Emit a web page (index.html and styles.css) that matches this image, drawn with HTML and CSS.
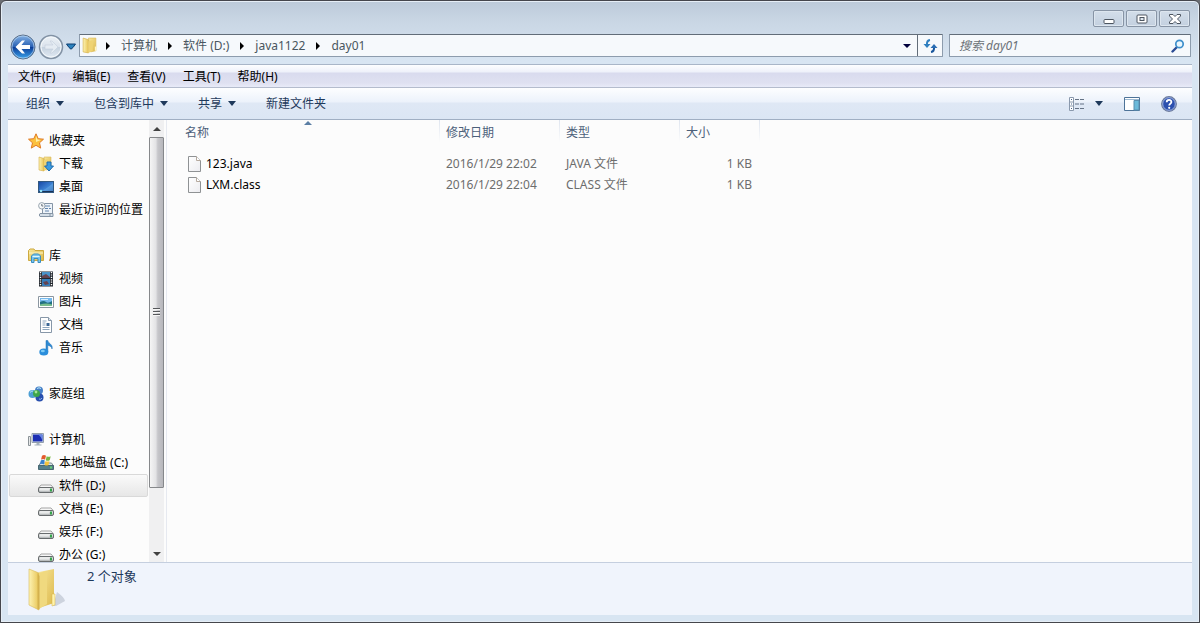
FILE: index.html
```html
<!DOCTYPE html>
<html lang="zh-CN">
<head>
<meta charset="utf-8">
<title>day01</title>
<link rel="stylesheet" href="styles.css">
</head>
<body>
<svg class="defs" aria-hidden="true">
  <defs>
    <linearGradient id="gold" x1="0" x2="1"><stop offset="0" stop-color="#fdf3b4"/><stop offset="1" stop-color="#e8c555"/></linearGradient>
    <linearGradient id="goldDeep" x1="0" x2="1" y2="1"><stop offset="0" stop-color="#f8e79a"/><stop offset="1" stop-color="#dcb84c"/></linearGradient>
    <linearGradient id="blue" y2="1" x2="0"><stop offset="0" stop-color="#86b4e6"/><stop offset=".48" stop-color="#2b62b4"/><stop offset=".52" stop-color="#0d3f99"/><stop offset="1" stop-color="#3ba6ee"/></linearGradient>
    <linearGradient id="glass" y2="1" x2="0"><stop offset="0" stop-color="#edf2f7"/><stop offset=".48" stop-color="#dbe3ec"/><stop offset=".52" stop-color="#c6d2df"/><stop offset="1" stop-color="#e3ecf5"/></linearGradient>
    <linearGradient id="sky" x2="1" y2="1"><stop offset="0" stop-color="#1646a4"/><stop offset=".6" stop-color="#3f86d6"/><stop offset="1" stop-color="#1b4c95"/></linearGradient>
    <linearGradient id="page" x2="1" y2="1"><stop offset="0" stop-color="#fff"/><stop offset="1" stop-color="#ececf0"/></linearGradient>
    <linearGradient id="metal" y2="1" x2="0"><stop offset="0" stop-color="#fafafa"/><stop offset="1" stop-color="#a9adaf"/></linearGradient>
    <symbol id="drive" viewBox="0 0 16 16">
      <path d="M3 6h10l2.500 3H.5z" fill="#f7f7f7" stroke="#a5a5a5"/>
      <rect x=".5" y="8.500" width="15" height="5" rx="1.500" fill="url(#metal)" stroke="#686c6e"/>
      <rect x="2" y="9.500" width="9" height="2" fill="#e9ebeb"/>
      <rect x="12" y="9.500" width="2" height="3" fill="#35a54a"/>
    </symbol>
    <symbol id="file" viewBox="0 0 14 16">
      <path d="M.5.500h8l4 4v11H.5z" fill="url(#page)" stroke="#8f9294"/>
      <path d="M8.500.500v4h4" fill="#fff" stroke="#b5a99e"/>
    </symbol>
    <symbol id="folder" viewBox="0 0 14 16">
      <path d="M6 1h7v12l-5 1z" fill="url(#goldDeep)" stroke="#dcbb5c" stroke-width=".6"/>
      <path d="M1 1l5 1.500V15l-5-1z" fill="url(#gold)" stroke="#d3ad45" stroke-width=".6"/>
      <path d="M6 4l4-1v10l-4 2z" fill="#efd373"/>
      <path d="M12 9h1.500v4H12z" fill="#fff5c4"/>
    </symbol>
  </defs>
</svg>

<div class="window">
  <header class="titlebar">
    <button class="win-btn" aria-label="最小化"><svg width="12" height="12" viewBox="0 0 12 12"><rect x="1" y="6.500" width="10" height="4" rx="1" fill="#fff" stroke="#4c5560"/></svg></button>
    <button class="win-btn" aria-label="还原"><svg width="12" height="12" viewBox="0 0 12 12"><rect x="1" y="2" width="10" height="8" rx="1" fill="#fff" stroke="#4c5560"/><rect x="4" y="4.500" width="4" height="3" fill="#dfe8f1" stroke="#4c5560"/></svg></button>
    <button class="win-btn" aria-label="关闭"><svg width="12" height="12" viewBox="0 0 12 12"><path d="M.5 1.500h3.500L6 3.500l2-2h3.500V3L8.500 6l3 3v1.500H8l-2-2-2 2H.5V9l3-3-3-3z" fill="#fff" stroke="#4c5560"/></svg></button>
  </header>

  <div class="navbar">
    <div class="history">
      <button class="round back" aria-label="后退"><svg width="26" height="26" viewBox="0 0 26 26"><circle cx="13" cy="13" r="12" fill="url(#blue)" stroke="#5b6f88"/><circle cx="13" cy="13" r="11" fill="none" stroke="#b7d3ef" stroke-opacity=".7"/><path d="M5.500 13l6.500-6.500h3L11.500 11H20v4h-8.500l3.500 4.500h-3z" fill="#fff"/></svg></button>
      <button class="round" aria-label="前进"><svg width="26" height="26" viewBox="0 0 26 26"><circle cx="13" cy="13" r="11.500" fill="url(#glass)" stroke="#8292a4" stroke-width="1.500"/><circle cx="13" cy="13" r="10" fill="none" stroke="#f4f8fb"/><path d="M20 13l-6-6h-2l3 4H7v4h8l-3 4h2z" fill="#e5ecf3" stroke="#c3cfdb" stroke-width=".6"/></svg></button>
      <button class="round" aria-label="最近的页面"><svg width="10" height="7" viewBox="0 0 10 7"><path d="M.5 1h9L7 4.500 5 6.200 3 4.500z" fill="#2c82bd" stroke="#0d3f72"/></svg></button>
    </div>
    <div class="address">
      <svg class="addr-icon" width="15" height="17"><use href="#folder"/></svg>
      <nav class="crumbs" aria-label="路径">
        <i class="arrow"></i><a href="#">计算机</a>
        <i class="arrow"></i><a href="#">软件 (D:)</a>
        <i class="arrow"></i><a href="#">java1122</a>
        <i class="arrow"></i><a href="#">day01</a>
      </nav>
      <button class="addr-drop" aria-label="以前的位置"><i class="caret dark"></i></button>
      <button class="refresh" aria-label="刷新"><svg width="15" height="14" viewBox="0 0 15 14"><path d="M7 1Q3.500 1.500 4 6" fill="none" stroke="#2f7fc0" stroke-width="2"/><path d="M.5 5h7L4 9z" fill="#2f7fc0"/><path d="M8 13q3.500-.5 3-5" fill="none" stroke="#17559c" stroke-width="2"/><path d="M7.500 9h7L11 5z" fill="#2a6db4"/></svg></button>
    </div>
    <label class="search">
      <input type="search" placeholder="搜索 day01" aria-label="搜索 day01">
      <svg width="14" height="14" viewBox="0 0 14 14"><path d="M1.500 12.500L6 8" stroke="#2b4b94" stroke-width="2.400" stroke-linecap="round"/><circle cx="8.500" cy="5" r="3.700" fill="#e9f6fd" stroke="#3d8ecb" stroke-width="1.700"/></svg>
    </label>
  </div>

  <div class="client">
    <nav class="menubar" aria-label="菜单">
      <button>文件(F)</button><button>编辑(E)</button><button>查看(V)</button><button>工具(T)</button><button>帮助(H)</button>
    </nav>
    <div class="toolbar">
      <button>组织<i class="caret"></i></button>
      <button>包含到库中<i class="caret"></i></button>
      <button>共享<i class="caret"></i></button>
      <button>新建文件夹</button>
      <div class="tools">
        <button class="view" aria-label="更改您的视图"><svg width="16" height="14" viewBox="0 0 16 14"><path d="M.5.500h4v13h-4zM.5 5h4M.5 9h4" fill="#fff" stroke="#8a99ad"/><path d="M2 2.500h1M2 7h1M2 11.500h1" stroke="#47648c"/><path d="M6 2.500h4m1 0h4M6 7h4m1 0h4M6 11.500h4m1 0h4" stroke="#657386"/></svg><i class="caret"></i></button>
        <button aria-label="显示预览窗格"><svg width="16" height="14" viewBox="0 0 16 14"><path d="M.5.500h15v13H.5z" fill="#fff" stroke="#4d7398"/><path d="M1 2.500h14" stroke="#9dbad3"/><path d="M10 3.500h5v9.500h-5z" fill="#6bb9d9" stroke="#5b8fae"/></svg></button>
        <button aria-label="获取帮助"><svg width="16" height="16" viewBox="0 0 16 16"><circle cx="8" cy="8" r="7.300" fill="#2b4fae" stroke="#6d7c9c" stroke-width="1.200"/><circle cx="8" cy="8" r="6.300" fill="none" stroke="#b9c9ec" stroke-width=".8"/><path d="M5.700 6.300C5.700 3.200 10.500 3.200 10.400 6c0 1.600-2.200 1.700-2.200 3.600" fill="none" stroke="#fff" stroke-width="1.800"/><circle cx="8.200" cy="11.800" r="1.100" fill="#fff"/></svg></button>
      </div>
    </div>

    <div class="body">
      <aside class="sidebar">
        <ul class="tree">
          <li><a class="row" href="#"><svg width="16" height="16" viewBox="0 0 16 16"><path d="M8 .8l2.200 4.900 5.300.5-4 3.600 1.200 5.300L8 12.300l-4.700 2.800 1.200-5.300-4-3.600 5.300-.5z" fill="#fbc13e" stroke="#e07a23"/><path d="M8 3l1.400 3.500 3.400.4L8 9z" fill="#fff0a8"/></svg>收藏夹</a>
            <ul>
              <li><a class="row" href="#"><svg width="16" height="16" viewBox="0 0 16 16"><use href="#folder" width="14" height="16"/><path d="M9 6h4v4h2.500L11 15 6.500 10H9z" fill="#3c9be0" stroke="#1f6cae"/></svg>下载</a></li>
              <li><a class="row" href="#"><svg width="16" height="16" viewBox="0 0 16 16"><rect x=".5" y="2.500" width="15" height="11" fill="url(#sky)" stroke="#32587f"/><path d="M1 12q7-1 14-8v9H1z" fill="#69a9e6" opacity=".5"/><path d="M1 12.500h14" stroke="#173257"/><circle cx="3" cy="12" r="1.300" fill="#8fe0f2"/></svg>桌面</a></li>
              <li><a class="row" href="#"><svg width="16" height="16" viewBox="0 0 16 16"><path d="M4.500 1.500h10v11h-10z" fill="#edf3f9" stroke="#8595a6"/><path d="M7 4h5M7 6.500h3M11 6.500h2M7 9h4" stroke="#6385ad"/><path d="M2 11.500h10v3H2q-1.500-1.500 0-3zm10 0h3v3h-3" fill="#d4dee7" stroke="#8595a6"/><circle cx="3.800" cy="3.800" r="3.200" fill="#f7f9fa" stroke="#98a4ae"/><path d="M3.800 2v2h1.500" fill="none" stroke="#66707a"/></svg>最近访问的位置</a></li>
            </ul>
          </li>
          <li><a class="row" href="#"><svg width="16" height="16" viewBox="0 0 16 16"><path d="M.5 2.500L2 1h4l1 1.500h8.500v10H.5z" fill="url(#goldDeep)" stroke="#cda93f"/><path d="M1 5h14" stroke="#fff6c7"/><path d="M3.500 14.500V8l2-2h5l2 2v6.500h-2.500v-4h-4v4z" fill="#7bc5ec" stroke="#398ec3"/><path d="M4.500 8.500h7" stroke="#def5fd"/></svg>库</a>
            <ul>
              <li><a class="row" href="#"><svg width="16" height="16" viewBox="0 0 16 16"><path d="M1 .5h14v15H1z" fill="#22272e"/><path d="M4 1h8v6H4z" fill="#4a92c8"/><path d="M4 8h8v7H4z" fill="#367dba"/><path d="M4 5l4-2 4 3v1H4zM5 11l4-1 2 3-4 1z" fill="#65424f"/><path d="M2.500 1v14M13.500 1v14" stroke="#fff" stroke-width="1.400" stroke-dasharray="1.200 1.200"/></svg>视频</a></li>
              <li><a class="row" href="#"><svg width="16" height="16" viewBox="0 0 16 16"><path d="M.5 2.500h15v11H.5z" fill="#fff" stroke="#8b96a0"/><path d="M2 4h12v8H2z" fill="#74b8ec"/><path d="M2 8q4-2 6 0t6-1v5H2z" fill="#217083"/><path d="M2 10.500q6-2 12 0V12H2z" fill="#78bd8d"/><path d="M3 5h7v1H3z" fill="#d9f0ff"/></svg>图片</a></li>
              <li><a class="row" href="#"><svg width="16" height="16" viewBox="0 0 16 16"><path d="M2.500.500h8l3 3v12h-11z" fill="#fff" stroke="#8797a8"/><path d="M10.500.500v3h3" fill="#dbe5ed" stroke="#8797a8"/><path d="M4.500 4h4M4.500 6h3M4.500 8h3M4.500 10.500h7M4.500 12.500h7" stroke="#8ca5bd"/><path d="M8.500 6h3v3h-3z" fill="#3b6796"/></svg>文档</a></li>
              <li><a class="row" href="#"><svg width="16" height="16" viewBox="0 0 16 16"><path d="M8 .5h1.800c.3 3 5.700 4 4.200 8.500-.2-2-2.500-3.500-4.200-3.700V12H8z" fill="#2f8bd4" stroke="#2370b2" stroke-width=".5"/><ellipse cx="5.800" cy="12" rx="4.500" ry="3.500" fill="#2b8edb"/><ellipse cx="4.800" cy="11" rx="2" ry="1.300" fill="#7dcbf6"/></svg>音乐</a></li>
            </ul>
          </li>
          <li><a class="row" href="#"><svg width="16" height="16" viewBox="0 0 16 16"><circle cx="4.500" cy="8" r="4" fill="#4d9fd4"/><circle cx="11" cy="4.500" r="4" fill="#4780c8"/><circle cx="11.500" cy="11.500" r="4" fill="#284fae"/><circle cx="8.500" cy="7.500" r="3.500" fill="#3da64a"/><path d="M2 6.500q1-1.500 3-1.500M9 2.500q2-1.500 4 0" stroke="#bcecf8" fill="none"/><path d="M11 13q2 1 3-1" stroke="#8db5ee" fill="none"/><circle cx="8" cy="6" r="1.400" fill="#a7e69a"/></svg>家庭组</a></li>
          <li><a class="row" href="#"><svg width="16" height="16" viewBox="0 0 16 16"><path d="M.5 4.500h2v9h-2z" fill="#e7e9ea" stroke="#8b9297"/><path d="M4 1.500h11.500v9H4z" fill="#dce4ed" stroke="#929fad"/><path d="M5 2.500h9.500v7H5z" fill="#1b2eb3"/><path d="M10 2.500h4.500v7q-1-5-4.500-7z" fill="#6887e2"/><path d="M8.500 11h3v1.500h2v1h-7v-1h2z" fill="#a5b1bc"/></svg>计算机</a>
            <ul>
              <li><a class="row" href="#"><svg width="16" height="16" viewBox="0 0 16 16"><path d="M2.500 8h11l2 3H.5z" fill="#d8e2e7" stroke="#7a8a92"/><path d="M.5 10.500h15v4H.5z" fill="#557f8c" stroke="#486872"/><path d="M12 11.500h2v2h-2z" fill="#62d371"/><path d="M4 .8q2-1.500 4 0l-1 4q-2-1.500-4 0z" fill="#e35b2d"/><path d="M8.700 1.200q2 1.200 4 0l-1 4q-2 1.200-4 0z" fill="#79b844"/><path d="M2.800 5.500q2-1.500 4 0l-1 4q-2-1.500-4 0z" fill="#3781cf"/><path d="M7.500 6q2 1.200 4 0l-1 4q-2 1.200-4 0z" fill="#f5c33b"/></svg>本地磁盘 (C:)</a></li>
              <li><a class="row selected" href="#"><svg class="disk" width="16" height="16"><use href="#drive"/></svg>软件 (D:)</a></li>
              <li><a class="row" href="#"><svg class="disk" width="16" height="16"><use href="#drive"/></svg>文档 (E:)</a></li>
              <li><a class="row" href="#"><svg class="disk" width="16" height="16"><use href="#drive"/></svg>娱乐 (F:)</a></li>
              <li><a class="row" href="#"><svg class="disk" width="16" height="16"><use href="#drive"/></svg>办公 (G:)</a></li>
            </ul>
          </li>
        </ul>
        <div class="scrollbar">
          <button class="scroll-btn" aria-label="向上滚动"><i class="caret up"></i></button>
          <div class="track"><div class="thumb"><i class="grip"></i></div></div>
          <button class="scroll-btn" aria-label="向下滚动"><i class="caret down"></i></button>
        </div>
      </aside>

      <main class="files">
        <table>
          <colgroup><col class="c-name"><col class="c-date"><col class="c-type"><col class="c-size"></colgroup>
          <thead>
            <tr><th class="sorted">名称<i class="sort"></i></th><th>修改日期</th><th>类型</th><th>大小</th></tr>
          </thead>
          <tbody>
            <tr><td><span class="file"><svg width="14" height="16"><use href="#file"/></svg>123.java</span></td><td>2016/1/29 22:02</td><td>JAVA 文件</td><td>1 KB</td></tr>
            <tr><td><span class="file"><svg width="14" height="16"><use href="#file"/></svg>LXM.class</span></td><td>2016/1/29 22:04</td><td>CLASS 文件</td><td>1 KB</td></tr>
          </tbody>
        </table>
      </main>
    </div>

    <footer class="details">
      <svg width="40" height="44" viewBox="0 0 40 44"><path d="M25 38l4-14q8 6 8 9l-9 5z" fill="#a9b1bf" opacity=".5"/><path d="M11 4l15-3v34l-15 5z" fill="url(#goldDeep)"/><path d="M1 1l10 4v37L1 37z" fill="url(#gold)" stroke="#d9b958" stroke-width=".6"/><path d="M11 5l8-2v33l-8 5z" fill="#f0d97f"/><path d="M9.500 5L11.500 8v33l-2 .5z" fill="#d4b14e"/><path d="M24 26h3v11l-3 1z" fill="#fff3ac" stroke="#d5b244" stroke-width=".5"/></svg>
      <span>2 个对象</span>
    </footer>
  </div>
</div>
</body>
</html>
```

FILE: styles.css
```css
* {
  box-sizing: border-box;
}

body {
  margin: 0;
  background: #6b6e73;
  font: 12px/16px "Noto Sans", "Noto Sans CJK SC", sans-serif;
  color: #000;
}

button {
  display: flex;
  align-items: center;
  justify-content: center;
  padding: 0;
  border: 0;
  background: none;
  font: inherit;
  color: inherit;
}

a {
  color: inherit;
  text-decoration: none;
}

ul {
  margin: 0;
  padding: 0;
  list-style: none;
}

svg {
  flex: none;
  display: block;
}

.defs {
  position: absolute;
  width: 0;
  height: 0;
}

.window {
  display: flex;
  flex-direction: column;
  height: 100vh;
  padding: 0 7px 7px;
  border: 1px solid #45464c;
  border-radius: 6px 6px 0 0;
  background: linear-gradient(#bccad9, #c9d6e4 20px, #d8e5f2 60px);
  box-shadow: inset 0 0 0 1px #e6eef6;
}

.titlebar {
  display: flex;
  flex: none;
  justify-content: flex-end;
  gap: 2px;
  height: 33px;
  padding: 9px 2px 7px;
}

.win-btn {
  width: 31px;
  border: 1px solid #8794a5;
  border-radius: 2px;
  background: linear-gradient(#d3deea, #c3d0df);
  box-shadow: inset 0 0 0 1px #dde6ef;
}

.navbar {
  display: flex;
  flex: none;
  height: 30px;
  padding-right: 1px;
}

.history {
  display: flex;
  align-items: center;
  align-self: flex-start;
  gap: 2px;
  height: 25px;
  margin-right: 3px;
  padding-left: 2px;
}

.address,
.search {
  display: flex;
  align-items: center;
  height: 23px;
  border: 1px solid #8d9cad;
  border-top-color: #626d79;
  border-radius: 1px;
  background: #f6f9fc;
}

.address {
  flex: 1;
  color: #495660;
}

.addr-icon {
  margin-left: 2px;
}

.crumbs {
  display: flex;
  flex: 1;
  align-items: center;
  gap: 11px;
  padding-left: 9px;
}

.arrow {
  border: 4px solid transparent;
  border-right: 0;
  border-left-color: #000;
}

.addr-drop {
  width: 20px;
  height: 100%;
}

.refresh {
  width: 25px;
  height: 100%;
  border-left: 1px solid #626d79;
}

.search {
  width: 242px;
  margin-left: 6px;
  padding: 0 5px 0 9px;
}

.search input {
  flex: 1;
  min-width: 0;
  padding: 0;
  border: 0;
  outline: 0;
  background: none;
  font: inherit;
  font-style: italic;
}

.search input::placeholder {
  color: #6c7278;
  opacity: 1;
}

.client {
  display: flex;
  flex: 1;
  flex-direction: column;
  min-height: 0;
  border-top: 1px solid #a9b6c8;
  background: #fcfcfc;
}

.menubar {
  display: flex;
  flex: none;
  gap: 17px;
  height: 23px;
  padding: 2px 10px 0;
  border-bottom: 1px solid #b4bccd;
  background: linear-gradient(#fdfeff, #eef1fa 7px, #d9dbee 8px, #dfe1f1 18px, #e8ebf8);
}

.toolbar {
  display: flex;
  flex: none;
  gap: 30px;
  height: 32px;
  padding: 0 15px 0 18px;
  border-bottom: 1px solid #a0afc3;
  background: linear-gradient(#fdfeff, #ecf2fb 14px, #dfe8f5 15px, #dbe6f4);
  color: #1e395b;
}

.toolbar button {
  gap: 6px;
}

.tools {
  display: flex;
  gap: 21px;
  margin-left: auto;
}

.tools .view {
  gap: 10px;
}

.caret {
  border: 4px solid transparent;
  border-top: 5px solid #1e395b;
  border-bottom: 0;
}

.caret.dark {
  border-top: 4px solid #00003c;
}

.caret.down {
  border-top: 4px solid #414141;
}

.caret.up {
  border-top: 0;
  border-bottom: 4px solid #414141;
}

.body {
  display: flex;
  flex: 1;
  min-height: 0;
}

.sidebar {
  display: flex;
  flex: none;
  width: 159px;
  padding-right: 2px;
  border-right: 1px solid #e6e9f0;
  background: #fcfcfc;
}

.tree {
  flex: 1;
  padding: 9px 1px 0;
  overflow: hidden;
}

.tree > li {
  margin-bottom: 23px;
}

.row {
  display: flex;
  align-items: center;
  gap: 5px;
  height: 23px;
  padding-left: 19px;
  white-space: nowrap;
}

.tree ul .row {
  padding-left: 29px;
}

.tree ul .row.selected {
  padding-left: 28px;
  border: 1px solid #d9d9d9;
  border-radius: 2px;
  background: linear-gradient(#fafafa, #e7e7e7);
}

.disk {
  margin-top: 2px;
}

.scrollbar {
  display: flex;
  flex: none;
  flex-direction: column;
  width: 15px;
  background: #f0f0f1;
}

.scroll-btn {
  flex: none;
  height: 17px;
}

.track {
  flex: 1;
}

.thumb {
  display: grid;
  place-items: center;
  height: 86%;
  border: 1px solid #86888b;
  border-radius: 1px;
  background: linear-gradient(90deg, #f5f5f5, #e3e3e5 45%, #c6c6ca 60%, #b7b7bc);
}

.grip {
  width: 7px;
  height: 8px;
  background: repeating-linear-gradient(#55575a 0 1px, #f5f5f5 1px 2px, transparent 2px 3px);
}

.files {
  flex: 1;
  min-width: 0;
}

table {
  table-layout: fixed;
  width: 593px;
  border-collapse: separate;
  border-spacing: 0;
}

.c-name {
  width: 273px;
}

.c-date,
.c-type {
  width: 120px;
}

.c-size {
  width: 80px;
}

th {
  height: 33px;
  padding: 0 6px 7px;
  background: linear-gradient(#dfe5ef, #fcfcfc) right top / 1px 22px no-repeat;
  color: #4c607a;
  font-weight: 400;
  text-align: left;
}

th:first-child {
  padding-left: 18px;
}

.sorted {
  position: relative;
}

.sort {
  position: absolute;
  top: 1px;
  left: 50%;
  border: 4px solid transparent;
  border-top: 0;
  border-bottom-color: #5b7ea4;
}

td {
  height: 21px;
  padding: 0 6px;
  color: #6d6d6d;
}

td:first-child {
  padding-left: 21px;
  color: #000;
}

td:last-child {
  padding-right: 8px;
  text-align: right;
}

.file {
  display: flex;
  align-items: center;
  gap: 4px;
}

.details {
  display: flex;
  flex: none;
  gap: 19px;
  height: 53px;
  padding: 5px 20px;
  border-top: 1px solid #c5cfdf;
  background: #f0f4fc;
  color: #1e395b;
  font-size: 13px;
}
```
